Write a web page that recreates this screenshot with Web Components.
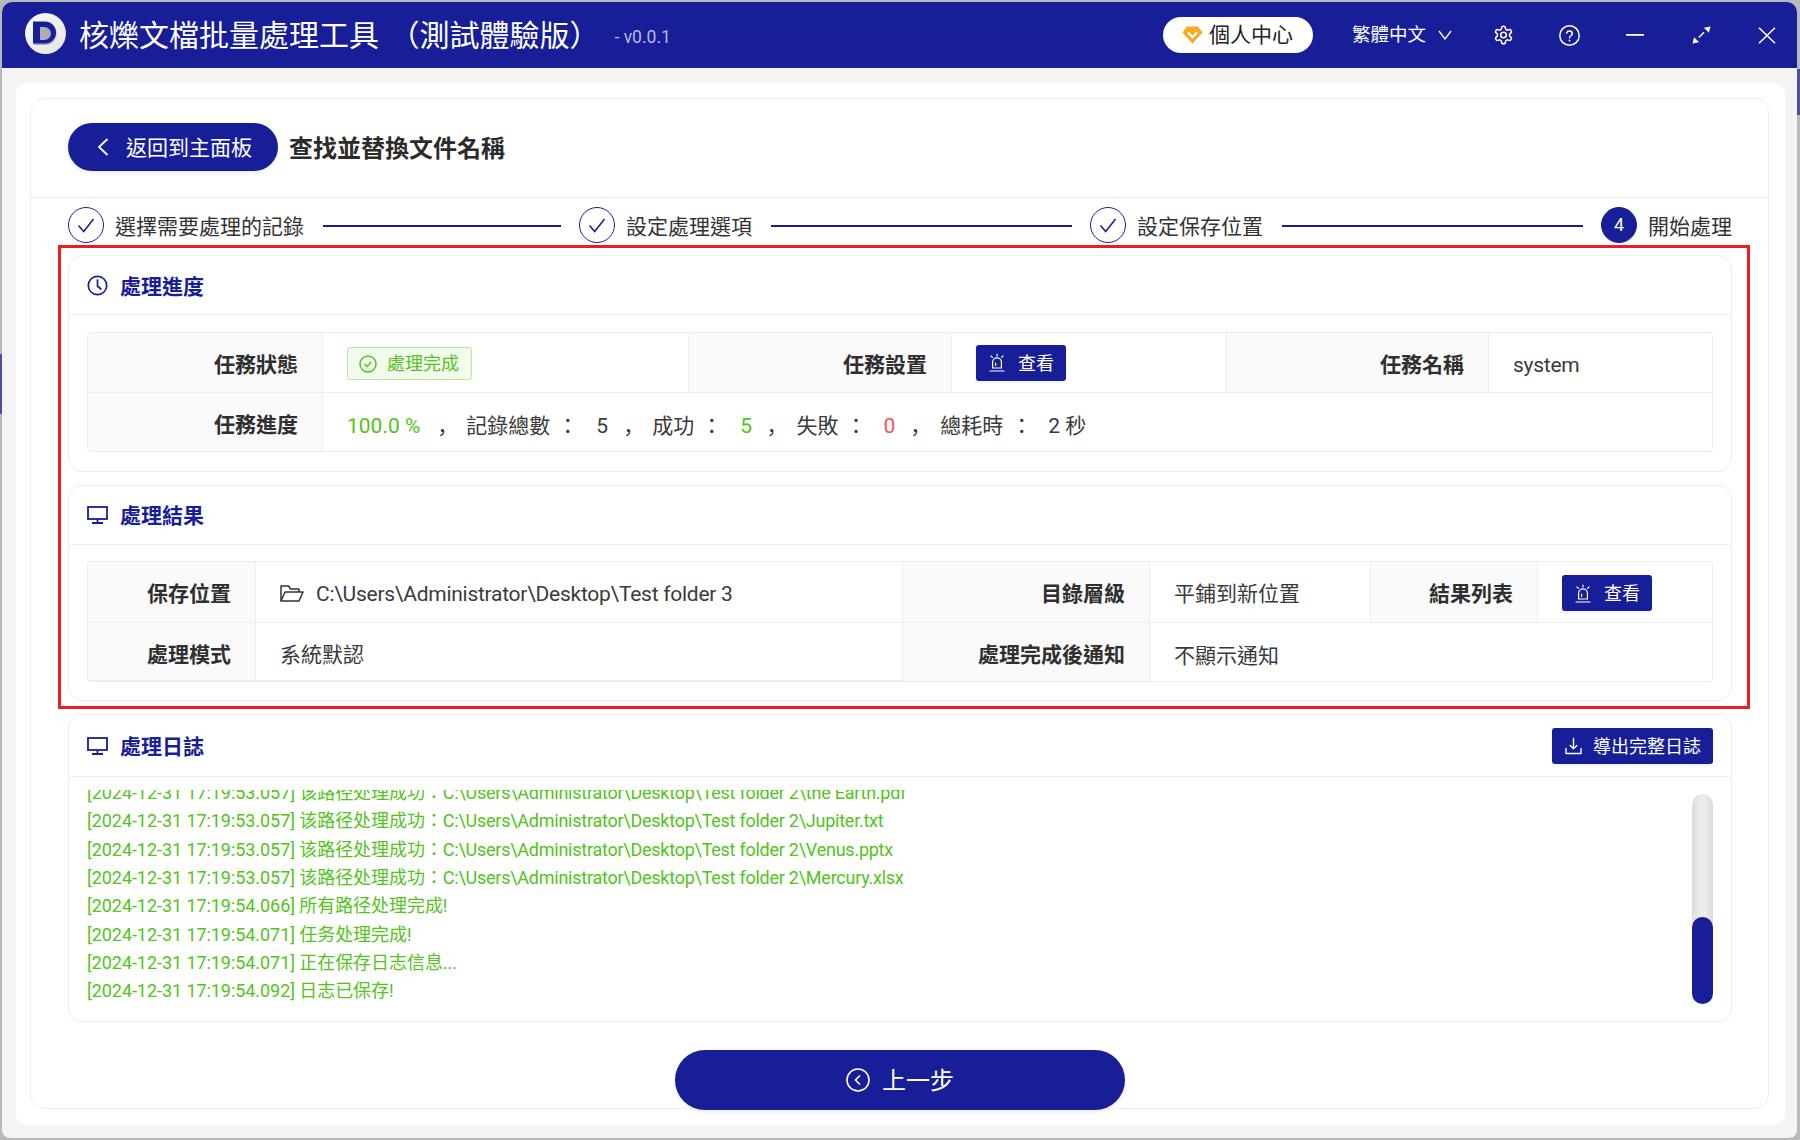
<!DOCTYPE html>
<html lang="zh-Hant">
<head>
<meta charset="utf-8">
<title>核爍文檔批量處理工具</title>
<style>
html,body{margin:0;padding:0;width:1800px;height:1140px;overflow:hidden}
body{font-family:Roboto,"Noto Sans CJK TC",sans-serif;color:#333;background:linear-gradient(#4a50a6,#4a50a6) 0 354px/2px 60px no-repeat,linear-gradient(#4a50a6,#4a50a6) 1797px 69px/3px 46px no-repeat,#b9b9b9}
svg{display:block}
.lat{letter-spacing:-.25px}
</style>
</head>
<body>
<x-window>
  <x-titlebar slot="bar"></x-titlebar>
  <x-main>
    <x-header title="查找並替換文件名稱" back="返回到主面板"></x-header>
    <x-steps>
      <x-step label="選擇需要處理的記錄" done></x-step>
      <x-step label="設定處理選項" done></x-step>
      <x-step label="設定保存位置" done></x-step>
      <x-step label="開始處理" num="4" last></x-step>
    </x-steps>
    <x-highlight>
      <x-card heading="處理進度" icon="clock" first>
        <x-desc cols="235px 366px 263px 275px 262px 1fr" rows="60px 58px">
          <x-cell label>任務狀態</x-cell>
          <x-cell style="padding-top:2px"><x-tag>處理完成</x-tag></x-cell>
          <x-cell label>任務設置</x-cell>
          <x-cell><x-btn icon="alarm">查看</x-btn></x-cell>
          <x-cell label>任務名稱</x-cell>
          <x-cell text><span class="lat">system</span></x-cell>
          <x-cell label>任務進度</x-cell>
          <x-cell span="5" last text><x-progress></x-progress></x-cell>
        </x-desc>
      </x-card>
      <x-card heading="處理結果" icon="monitor" gap>
        <x-desc cols="168px 647px 247px 221px 167px 1fr" rows="61px 58px">
          <x-cell label>保存位置</x-cell>
          <x-cell text><x-path>C:\Users\Administrator\Desktop\Test folder 3</x-path></x-cell>
          <x-cell label>目錄層級</x-cell>
          <x-cell text>平鋪到新位置</x-cell>
          <x-cell label>結果列表</x-cell>
          <x-cell style="padding-top:2px"><x-btn icon="alarm">查看</x-btn></x-cell>
          <x-cell label>處理模式</x-cell>
          <x-cell text>系統默認</x-cell>
          <x-cell label>處理完成後通知</x-cell>
          <x-cell span="3" last text>不顯示通知</x-cell>
        </x-desc>
      </x-card>
    </x-highlight>
    <x-card heading="處理日誌" icon="monitor" log>
      <x-btn slot="action" icon="download" wide>導出完整日誌</x-btn>
      <x-log>
        <div>[2024-12-31 17:19:53.057] 该路径处理成功：<span class="lat">C:\Users\Administrator\Desktop\Test folder 2\the Earth.pdf</span></div>
        <div>[2024-12-31 17:19:53.057] 该路径处理成功：<span class="lat">C:\Users\Administrator\Desktop\Test folder 2\Jupiter.txt</span></div>
        <div>[2024-12-31 17:19:53.057] 该路径处理成功：<span class="lat">C:\Users\Administrator\Desktop\Test folder 2\Venus.pptx</span></div>
        <div>[2024-12-31 17:19:53.057] 该路径处理成功：<span class="lat">C:\Users\Administrator\Desktop\Test folder 2\Mercury.xlsx</span></div>
        <div>[2024-12-31 17:19:54.066] 所有路径处理完成!</div>
        <div>[2024-12-31 17:19:54.071] 任务处理完成!</div>
        <div>[2024-12-31 17:19:54.071] 正在保存日志信息...</div>
        <div>[2024-12-31 17:19:54.092] 日志已保存!</div>
      </x-log>
    </x-card>
    <x-prev>上一步</x-prev>
  </x-main>
</x-window>
<script>
const NAVY='#171e97';
const FONT='Roboto,"Noto Sans CJK TC",sans-serif';
const ICONS={
clock:`<svg width="21" height="21" viewBox="0 0 21 21" fill="none" stroke="${NAVY}" stroke-width="1.7" stroke-linecap="round"><circle cx="10.5" cy="10.5" r="9.2"/><path d="M10.5 5v6l3.4 3"/></svg>`,
monitor:`<svg width="21" height="18" viewBox="0 0 21 18" fill="none" stroke="${NAVY}" stroke-width="1.8"><rect x="1" y="1" width="19" height="12"/><path d="M10.5 13v3.5M5 17h11"/></svg>`,
alarm:`<svg width="16" height="19" viewBox="0 0 16 19" fill="none" stroke="#fff" stroke-width="1.2" stroke-linecap="round"><path d="M3.6 15V9.2a4.4 4.4 0 0 1 8.8 0V15z"/><path d="M1 18h14M8 1v2M2 3l1.4 1.4M14 3l-1.4 1.4M6.6 12.5V10"/></svg>`,
download:`<svg width="17" height="18" viewBox="0 0 17 18" fill="none" stroke="#fff" stroke-width="1.4" stroke-linecap="round" stroke-linejoin="round"><path d="M8.5 1.5v10M5.2 8.4l3.3 3.3 3.3-3.3M1 11.5V16.5h15v-5"/></svg>`
};
function def(name,css,html,init){
  customElements.define(name,class extends HTMLElement{
    constructor(){super();const r=this.attachShadow({mode:'open'});r.innerHTML=`<style>${css}</style>`+(typeof html==='function'?html(this):html);}
    connectedCallback(){if(init)init(this);}
  });
}
def('x-window',`
:host{display:flex;flex-direction:column;box-sizing:border-box;margin:2px 0 0 2px;width:1795px;height:1136px;background:#f4f4f4;border-radius:10px 10px 8px 8px;overflow:hidden;font-family:${FONT}}
`,`<slot name="bar"></slot><slot></slot>`);

def('x-titlebar',`
:host{display:flex;align-items:center;flex:none;height:66px;background:${NAVY};color:#fff;padding:0 21px 0 23px;box-sizing:border-box}
.logo{flex:none;margin:-4px 13px 0 0}
.t{font-size:30px;line-height:1;white-space:nowrap;margin-right:15px;word-spacing:3px;padding-top:2px}
.v{font-size:17.500px;line-height:1;color:#b8bbe0;white-space:nowrap;margin-top:5px}
.sp{flex:1}
.pill{display:flex;align-items:center;width:150px;height:36px;box-sizing:border-box;background:#fff;border-radius:18px;padding-left:19px;color:#222;font-size:21px;line-height:1;margin-right:39px;flex:none}
.pill svg{margin-right:6px}
.lang{font-size:18.5px;line-height:1;white-space:nowrap;margin-right:12px}
.i{flex:none}
`,`
<svg class="logo" width="41" height="41" viewBox="0 0 41 41"><defs><linearGradient id="g" x1="0" y1="0" x2="1" y2="1"><stop offset="0" stop-color="#fafafa"/><stop offset="1" stop-color="#e4e4e4"/></linearGradient></defs><circle cx="20.5" cy="20.5" r="20.5" fill="url(#g)"/><path d="M9 10h11.500a11 11 0 0 1 0 22H9z" fill="#77778a" opacity=".55"/><path fill-rule="evenodd" d="M8 8.500h12a11 11 0 0 1 0 22H8zM15 14v13h4.500a6.500 6.500 0 0 0 0-13z" fill="${NAVY}"/></svg>
<div class="t">核爍文檔批量處理工具 （測試體驗版）</div>
<div class="v">- v0.0.1</div>
<div class="sp"></div>
<div class="pill"><svg width="21" height="18" viewBox="0 0 21 18"><path d="M5 .5h11l4.5 6L10.5 17.5.5 6.500z" fill="#f8a91f"/><path d="M6 6.500l4.500 4.500 4.500-4.500" fill="none" stroke="#fff" stroke-width="2.400"/></svg>個人中心</div>
<div class="lang">繁體中文</div>
<svg class="i" style="margin-right:41px" width="14" height="10" viewBox="0 0 14 10" fill="none" stroke="#fff" stroke-width="1.300"><path d="M1 1l6 8 6-8"/></svg>
<svg class="i" style="margin-right:45px" width="21" height="22" viewBox="0 0 24 24" fill="none" stroke="#fff" stroke-width="1.800" stroke-linecap="round" stroke-linejoin="round"><path d="M12.220 2h-.440a2 2 0 0 0-2 2v.180a2 2 0 0 1-1 1.730l-.430.250a2 2 0 0 1-2 0l-.150-.080a2 2 0 0 0-2.730.730l-.220.380a2 2 0 0 0 .730 2.730l.150.100a2 2 0 0 1 1 1.720v.510a2 2 0 0 1-1 1.740l-.150.090a2 2 0 0 0-.730 2.730l.220.380a2 2 0 0 0 2.730.730l.150-.080a2 2 0 0 1 2 0l.430.250a2 2 0 0 1 1 1.730V20a2 2 0 0 0 2 2h.440a2 2 0 0 0 2-2v-.180a2 2 0 0 1 1-1.730l.430-.250a2 2 0 0 1 2 0l.150.080a2 2 0 0 0 2.730-.730l.220-.390a2 2 0 0 0-.730-2.730l-.150-.080a2 2 0 0 1-1-1.740v-.500a2 2 0 0 1 1-1.740l.150-.090a2 2 0 0 0 .730-2.730l-.220-.380a2 2 0 0 0-2.730-.730l-.150.080a2 2 0 0 1-2 0l-.430-.250a2 2 0 0 1-1-1.730V4a2 2 0 0 0-2-2z"/><circle cx="12" cy="12" r="3.200"/></svg>
<svg class="i" style="margin-right:46px" width="21" height="21" viewBox="0 0 21 21" fill="none" stroke="#fff" stroke-width="1.500" stroke-linecap="round"><circle cx="10.500" cy="10.500" r="9.700"/><path d="M7.600 8a3 3 0 0 1 5.800.8c0 1.800-2.900 2.100-2.900 3.900"/><path d="M10.500 15.400v.1" stroke-width="1.900"/></svg>
<svg class="i" style="margin-right:48px" width="18" height="2" viewBox="0 0 18 2"><rect width="18" height="1.800" fill="#fff"/></svg>
<svg class="i" style="margin-right:47px" width="19" height="18" viewBox="0 0 19 18" fill="none" stroke="#fff" stroke-width="1.500"><path d="M12 6.200L6.800 11.600"/><path d="M18.500.5l-6.600 1.300 5 5z" fill="#fff" stroke="none"/><path d="M.5 17.500l6.600-1.300-5-5z" fill="#fff" stroke="none"/></svg>
<svg class="i" width="18" height="17" viewBox="0 0 18 17" fill="none" stroke="#fff" stroke-width="1.600"><path d="M1 .7l16 15.600M17 .7L1 16.300"/></svg>
`);

def('x-main',`
:host{display:flex;flex-direction:column;flex:1;min-height:0;margin:15px 12px 13px 13.500px;background:#fff;border-radius:10px;padding:15px 16px 16px 14.500px;box-sizing:border-box}
.inner{display:flex;flex-direction:column;flex:1;min-height:0;border:1px solid #eeeeee;border-radius:14px;padding:0 18px 0 27px;box-sizing:border-box}
`,`<div class="inner"><slot></slot></div>`);

def('x-header',`
:host{display:flex;align-items:center;flex:none;box-sizing:border-box;padding:0 0 2px 37px;margin:0 -18px 0 -27px;border-bottom:1px solid #eeeeee;height:99px}
.b{display:flex;align-items:center;width:210px;height:48px;box-sizing:border-box;padding-left:28px;background:${NAVY};color:#fff;border-radius:24px;font-size:21px;line-height:1;box-shadow:0 2px 4px rgba(0,0,0,.08);margin-right:11px;white-space:nowrap}
.b svg{margin-right:17px}
.b span{padding-top:2px}
.t{font-size:24px;font-weight:700;line-height:1;color:#2b2b2b;white-space:nowrap;padding-top:4px}
`,h=>`<div class="b"><svg width="13" height="20" viewBox="0 0 13 20" fill="none" stroke="#fff" stroke-width="1.800"><path d="M11.500 2L3 10l8.500 8"/></svg><span>${h.getAttribute('back')}</span></div><div class="t">${h.getAttribute('title')}</div>`);

def('x-steps',`
:host{display:flex;flex:none;height:47px;padding:9px 0 0;margin-left:10px;box-sizing:border-box;width:1664px}
`,`<slot></slot>`);

def('x-step',`
:host{display:flex;align-items:flex-start;flex:0 0 511px;height:36px;font-size:21px;color:#333}
:host([last]){flex:1 1 auto}
.c{flex:none;width:36px;height:36px;box-sizing:border-box;border-radius:50%;border:1.500px solid ${NAVY};display:flex;align-items:center;justify-content:center;color:#fff;font-size:18px;line-height:1}
.c.n{background:${NAVY}}
.l{margin-left:11px;line-height:40px;white-space:nowrap}
.line{flex:1;height:2px;background:${NAVY};margin:18px 18px 0 19px}
`,h=>{
  const n=h.getAttribute('num');
  const c=n?`<div class="c n">${n}</div>`:`<div class="c"><svg width="18" height="15" viewBox="0 0 18 15" fill="none" stroke="${NAVY}" stroke-width="1.500"><path d="M1.500 7.500l5.200 6L16.500 1"/></svg></div>`;
  return `${c}<div class="l">${h.getAttribute('label')}</div>${h.hasAttribute('last')?'':'<div class="line"></div>'}`;
});

def('x-highlight',`
:host{display:block;flex:none;border:3px solid #ed1c24;padding:7px 15px 5px 7px;box-sizing:border-box}
`,`<slot></slot>`);

def('x-card',`
:host{display:block;flex:none;border:1px solid #eeeeee;border-radius:14px;box-sizing:border-box;background:#fff}
:host([gap]){margin-top:13px}
:host([log]){margin:5px 18px 0 10px;height:308px}
.h{display:flex;align-items:center;height:58px;padding:0 18px;border-bottom:1px solid #eeeeee}
:host([log]) .h{height:61px}
.t{font-size:21px;font-weight:700;line-height:1;color:${NAVY};margin-left:12px;white-space:nowrap;flex:1;padding-top:2px}
:host([first]) .t,:host([log]) .t{padding-top:4px}
.b{padding:17px 18px 19px}
:host([gap]) .b{padding:16px 18px 18px}
:host([log]) .b{padding:13px 18px 0}
svg{flex:none}
`,h=>`<div class="h">${ICONS[h.getAttribute('icon')]}<div class="t">${h.getAttribute('heading')}</div><slot name="action"></slot></div><div class="b"><slot></slot></div>`);

def('x-desc',`
:host{display:grid;border:1px solid #eeeeee;border-radius:3px;box-sizing:border-box;overflow:hidden}
`,`<slot></slot>`,h=>{
  h.style.gridTemplateColumns=h.getAttribute('cols');
  h.style.gridTemplateRows=h.getAttribute('rows');
});

def('x-cell',`
:host{display:flex;align-items:center;box-sizing:border-box;padding:0 24px;font-size:21px;line-height:1;color:#3a3a3a;border-right:1px solid #eeeeee;border-bottom:1px solid #eeeeee;white-space:nowrap;min-width:0}
:host([text]){padding-top:5px}
:host([label]){justify-content:flex-end;background:#fafafa;font-weight:700;color:#2f2f2f;padding-top:5px}
:host([text][row2]){padding-top:8px}
:host([label][row2]){padding-top:7px}
:host([last]){border-right:none}
`,`<slot></slot>`,h=>{
  if(h.hasAttribute('span'))h.style.gridColumn='span '+h.getAttribute('span');
  const i=[...h.parentNode.children].indexOf(h),n=h.parentNode.children.length;
  if(i>=n-2){h.style.borderBottom='none';}
  if(i>=6)h.setAttribute('row2','');
  if(i===5&&!h.hasAttribute('last'))h.style.borderRight='none';
});

def('x-tag',`
:host{display:inline-flex;align-items:center;width:125px;height:33px;box-sizing:border-box;padding-left:11px;background:#f2fbec;border:1px solid #b9e99a;border-radius:3px;color:#52c41a;font-size:18px;line-height:1;white-space:nowrap}
svg{margin-right:10px;flex:none}
`,`<svg width="18" height="18" viewBox="0 0 18 18" fill="none" stroke="#52c41a" stroke-width="1.400"><circle cx="9" cy="9" r="8"/><path d="M5.600 9l2.500 2.500 4.300-4.500"/></svg><slot></slot>`);

def('x-btn',`
:host{display:inline-flex;align-items:center;width:90px;height:36px;box-sizing:border-box;padding-left:13px;background:${NAVY};color:#fff;border-radius:3px;font-size:18px;line-height:1;white-space:nowrap;box-shadow:0 2px 3px rgba(23,30,151,.06);font-weight:400}
:host([wide]){width:161px}
svg{margin-right:13px;flex:none}
:host([wide]) svg{margin-right:11px}
span{padding-top:2px}
`,h=>`${ICONS[h.getAttribute('icon')]}<span><slot></slot></span>`);

def('x-path',`
:host{display:flex;align-items:center;line-height:1;letter-spacing:-.26px}
svg{margin:-3px 12px 0 0;flex:none}
`,`<svg width="24" height="17" viewBox="0 0 24 17" fill="none" stroke="#333" stroke-width="1.500" stroke-linejoin="round"><path d="M1 16V1h7.500l2 3H19v3"/><path d="M1 16l4-9h18l-4 9z"/></svg><slot></slot>`);

def('x-progress',`
:host{display:flex;align-items:center;line-height:1;white-space:nowrap;color:#3a3a3a}
.g{color:#52c41a}.r{color:#f5534f}
.p{font-family:Roboto,"Noto Sans CJK SC",sans-serif}
`,`<span class="g">100.0 %</span><span class="p" style="margin-left:17px">，</span><span style="margin-left:8px">記錄總數</span><span style="margin-left:7px">：</span><span style="margin-left:18px">5</span><span class="p" style="margin-left:15px">，</span><span style="margin-left:8px">成功</span><span style="margin-left:7px">：</span><span class="g" style="margin-left:18px">5</span><span class="p" style="margin-left:14.500px">，</span><span style="margin-left:9px">失敗</span><span style="margin-left:7px">：</span><span class="r" style="margin-left:17px">0</span><span class="p" style="margin-left:15px">，</span><span style="margin-left:9px">總耗時</span><span style="margin-left:8px">：</span><span style="margin-left:16px">2 秒</span>`);

def('x-log',`
:host{display:flex;height:216px;overflow:hidden;font-family:Roboto,"Noto Sans CJK SC",sans-serif;font-size:18px;color:#52c41a;letter-spacing:-.06px}
.l{flex:1;min-width:0;line-height:28.350px;white-space:nowrap;margin-top:-11px}
.tr{flex:none;width:21px;height:210px;margin:4px 0 0 0;border-radius:11px;background:linear-gradient(90deg,#dcdcdc,#ececec 40%,#ececec 60%,#dcdcdc);display:flex;flex-direction:column;justify-content:flex-end}
.th{height:87px;background:${NAVY};border-radius:11px}
`,`<div class="l"><slot></slot></div><div class="tr"><div class="th"></div></div>`);

def('x-prev',`
:host{display:flex;align-items:center;justify-content:center;flex:none;align-self:flex-start;width:450px;height:60px;margin:28px 0 -2px 617px;background:${NAVY};color:#fff;border-radius:30px;font-size:24px;line-height:1;box-shadow:0 2px 4px rgba(0,0,0,.08)}
svg{margin-right:12px}
span{padding-top:2px}
`,`<svg width="24" height="24" viewBox="0 0 24 24" fill="none" stroke="#fff" stroke-width="1.600"><circle cx="12" cy="12" r="11"/><path d="M14 7.500L9.500 12l4.500 4.500"/></svg><span><slot></slot></span>`);
</script>
</body>
</html>
